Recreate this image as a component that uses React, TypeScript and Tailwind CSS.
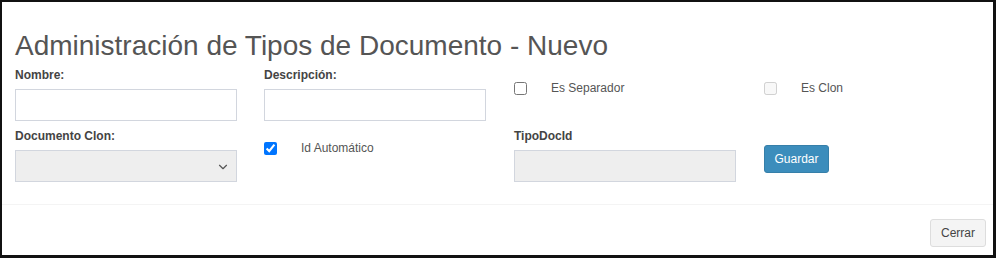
import { ChevronDown } from 'lucide-react';

function Field({ label, children }: { label: string; children: React.ReactNode }) {
    return (
        <div>
            <label className="block text-[12px] leading-[17px] font-bold text-[#444] mb-[5px]">{label}</label>
            {children}
        </div>
    );
}

function Check({ label, checked, disabled, top }: { label: string; checked?: boolean; disabled?: boolean; top: string }) {
    return (
        <div className={`flex items-start ${top}`}>
            <input
                type="checkbox"
                defaultChecked={checked}
                disabled={disabled}
                className="m-0 w-[13px] h-[13px] accent-[#0075ff]"
            />
            <span className="ml-[24px] -mt-[1px] text-[12px] leading-[14px] text-[#555]">{label}</span>
        </div>
    );
}

export default function App() {
    return (
        <div className="w-[996px] h-[260px] bg-white">
            <div className="w-[996px] h-[258px] border-t-2 border-l-2 border-r-[3px] border-b-[3px] border-[#111] font-['Liberation_Sans',Arial,sans-serif] flex flex-col">
                <div className="pl-[13px] pt-[28px] pb-[22px]">
                    <h1 className="text-[28px] leading-[32px] text-[#555] mb-[5px]">
                        Administración de Tipos de Documento - Nuevo
                    </h1>

                    <div className="grid grid-cols-[249px_250px_250px_250px] gap-y-[7px]">
                        <Field label="Nombre:">
                            <input className="w-[222px] h-[32px] border border-[#d2d6de] bg-white" />
                        </Field>
                        <Field label="Descripción:">
                            <input className="w-[222px] h-[32px] border border-[#d2d6de] bg-white" />
                        </Field>
                        <Check label="Es Separador" top="mt-[15px]" />
                        <Check label="Es Clon" disabled top="mt-[15px]" />

                        <Field label="Documento Clon:">
                            <div className="relative w-[222px] h-[32px] border border-[#d2d6de] bg-[#eee]">
                                <ChevronDown className="absolute right-[6px] top-[9px] w-[14px] h-[14px] text-[#555]" strokeWidth={2} />
                            </div>
                        </Field>
                        <Check label="Id Automático" checked top="mt-[14px]" />
                        <Field label="TipoDocId">
                            <input disabled className="w-[222px] h-[32px] border border-[#d2d6de] bg-[#eee]" />
                        </Field>
                        <div className="pt-[17px]">
                            <button className="w-[65px] h-[28px] rounded-[3px] bg-[#3c8dbc] border border-[#367fa9] text-white text-[12px]">
                                Guardar
                            </button>
                        </div>
                    </div>
                </div>

                <div className="border-t border-[#f4f4f4] flex justify-end pt-[14px] pr-[7px]">
                    <button className="w-[56px] h-[28px] rounded-[3px] bg-[#f4f4f4] border border-[#ddd] text-[#444] text-[12px]">
                        Cerrar
                    </button>
                </div>
            </div>
        </div>
    );
}
